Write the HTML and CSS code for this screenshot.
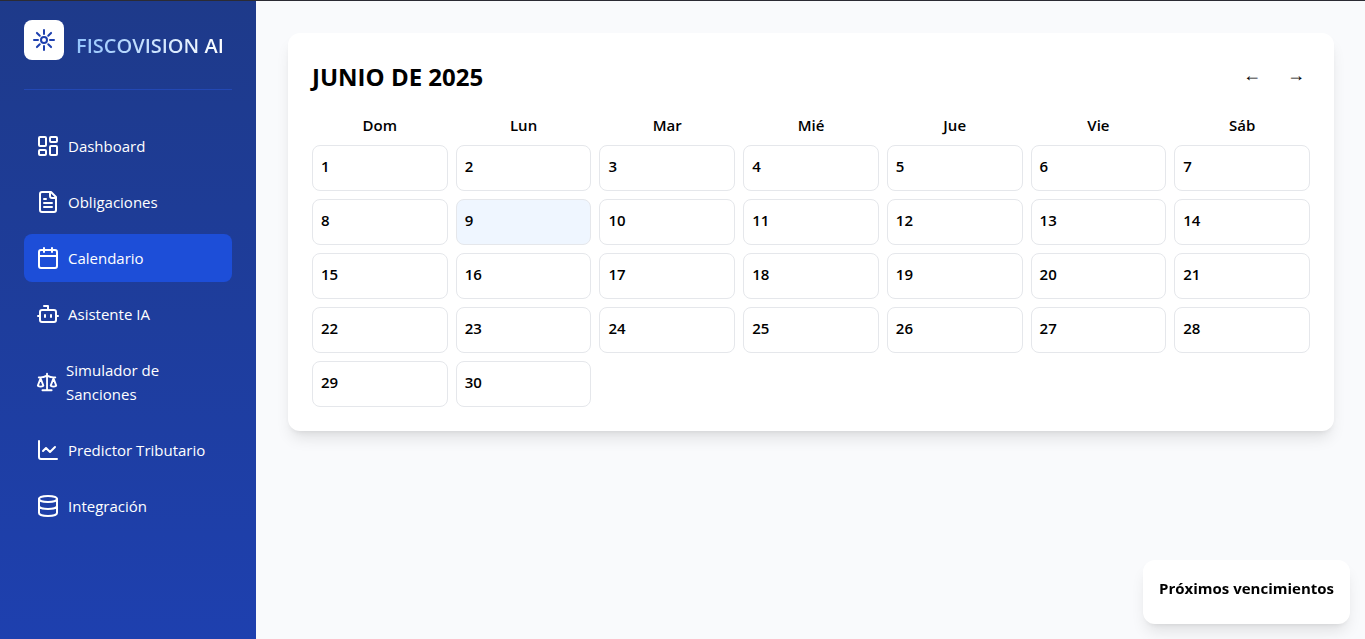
FILE: index.html
```html
<!DOCTYPE html>
<html lang="es">
<head>
<meta charset="utf-8">
<meta name="viewport" content="width=device-width, initial-scale=1">
<title>Fiscovision AI</title>
<link rel="stylesheet" href="styles.css">
</head>
<body class="app">
<aside class="sidebar">
  <div class="brand">
    <span class="brand-logo">
      <svg class="icon" viewBox="0 0 24 24" aria-hidden="true"><circle cx="12" cy="12" r="3"/><path d="M12 2v4M12 18v4M2 12h4M18 12h4M4.93 4.93l2.83 2.83M16.24 16.24l2.83 2.83M4.93 19.07l2.83-2.83M16.24 7.76l2.83-2.83"/></svg>
    </span>
    <span class="brand-name">FISCOVISION AI</span>
  </div>
  <nav class="menu">
    <a class="menu-link" href="#dashboard"><svg class="icon" viewBox="0 0 24 24" aria-hidden="true"><rect x="3" y="3" width="7" height="9" rx="1"/><rect x="14" y="3" width="7" height="5" rx="1"/><rect x="14" y="12" width="7" height="9" rx="1"/><rect x="3" y="16" width="7" height="5" rx="1"/></svg><span>Dashboard</span></a>
    <a class="menu-link" href="#obligaciones"><svg class="icon" viewBox="0 0 24 24" aria-hidden="true"><path d="M15 2H6a2 2 0 0 0-2 2v16a2 2 0 0 0 2 2h12a2 2 0 0 0 2-2V7Z"/><path d="M14 2v4a2 2 0 0 0 2 2h4M10 9H8M16 13H8M16 17H8"/></svg><span>Obligaciones</span></a>
    <a class="menu-link menu-link-active" href="#calendario" aria-current="page"><svg class="icon" viewBox="0 0 24 24" aria-hidden="true"><path d="M8 2v4M16 2v4M3 10h18"/><rect x="3" y="4" width="18" height="18" rx="2"/></svg><span>Calendario</span></a>
    <a class="menu-link" href="#asistente"><svg class="icon" viewBox="0 0 24 24" aria-hidden="true"><path d="M12 8V4H8"/><rect x="4" y="8" width="16" height="12" rx="2"/><path d="M2 14h2M20 14h2M15 13v2M9 13v2"/></svg><span>Asistente IA</span></a>
    <a class="menu-link" href="#simulador"><svg class="icon" viewBox="0 0 24 24" aria-hidden="true"><path d="m16 16 3-8 3 8c-.87.65-1.92 1-3 1s-2.13-.35-3-1ZM2 16l3-8 3 8c-.87.65-1.92 1-3 1s-2.13-.35-3-1ZM7 21h10M12 3v18M3 7h2c2 0 5-1 7-2 2 1 5 2 7 2h2"/></svg><span>Simulador de Sanciones</span></a>
    <a class="menu-link" href="#predictor"><svg class="icon" viewBox="0 0 24 24" aria-hidden="true"><path d="M3 3v16a2 2 0 0 0 2 2h16"/><path d="m7 13 3-3 4 4 5-5"/></svg><span>Predictor Tributario</span></a>
    <a class="menu-link" href="#integracion"><svg class="icon" viewBox="0 0 24 24" aria-hidden="true"><ellipse cx="12" cy="5" rx="9" ry="3"/><path d="M3 5v14a9 3 0 0 0 18 0V5M3 12a9 3 0 0 0 18 0"/></svg><span>Integración</span></a>
  </nav>
</aside>
<main class="content">
  <section class="calendar">
    <header class="calendar-header">
      <h1 class="calendar-title">JUNIO DE 2025</h1>
      <div class="calendar-nav">
        <button class="nav-button" type="button" aria-label="Mes anterior">←</button>
        <button class="nav-button" type="button" aria-label="Mes siguiente">→</button>
      </div>
    </header>
    <table class="month">
      <thead class="month-part">
        <tr class="week"><th class="weekday">Dom</th><th class="weekday">Lun</th><th class="weekday">Mar</th><th class="weekday">Mié</th><th class="weekday">Jue</th><th class="weekday">Vie</th><th class="weekday">Sáb</th></tr>
      </thead>
      <tbody class="month-part">
        <tr class="week"><td class="day">1</td><td class="day">2</td><td class="day">3</td><td class="day">4</td><td class="day">5</td><td class="day">6</td><td class="day">7</td></tr>
        <tr class="week"><td class="day">8</td><td class="day day-today">9</td><td class="day">10</td><td class="day">11</td><td class="day">12</td><td class="day">13</td><td class="day">14</td></tr>
        <tr class="week"><td class="day">15</td><td class="day">16</td><td class="day">17</td><td class="day">18</td><td class="day">19</td><td class="day">20</td><td class="day">21</td></tr>
        <tr class="week"><td class="day">22</td><td class="day">23</td><td class="day">24</td><td class="day">25</td><td class="day">26</td><td class="day">27</td><td class="day">28</td></tr>
        <tr class="week"><td class="day">29</td><td class="day">30</td></tr>
      </tbody>
    </table>
  </section>
</main>
<aside class="upcoming">
  <h2 class="upcoming-title">Próximos vencimientos</h2>
</aside>
</body>
</html>
```
FILE: styles.css
```css
*, *::before, *::after { box-sizing: border-box; }

.app {
  display: flex;
  min-height: 100vh;
  margin: 0;
  border-top: 1px solid #2b2b33;
  background: #f9fafc;
  color: #000;
  font: 15px/24px "Segoe UI", "Open Sans", "Noto Sans", sans-serif;
}

.icon {
  width: 24px;
  height: 24px;
  fill: none;
  stroke: currentColor;
  stroke-width: 2;
  stroke-linecap: round;
  stroke-linejoin: round;
}

.sidebar {
  flex: none;
  width: 256px;
  padding: 19px 24px 24px;
  background: linear-gradient(#1e3a8a, #1e40af);
  color: #fff;
}

.brand {
  display: flex;
  gap: 12px;
  align-items: center;
  padding-bottom: 29px;
  border-bottom: 1px solid #2348b4;
}

.brand-logo {
  display: flex;
  flex: none;
  align-items: center;
  justify-content: center;
  width: 40px;
  height: 40px;
  border-radius: 8px;
  background: #fff;
  color: #1e40af;
}

.brand-name {
  padding-top: 12px;
  background: linear-gradient(90deg, #93c5fd, #fff);
  background-clip: text;
  -webkit-background-clip: text;
  color: transparent;
  font-size: 20px;
  font-weight: 600;
  line-height: 28px;
  white-space: nowrap;
}

.menu {
  display: flex;
  flex-direction: column;
  gap: 8px;
  margin-top: 32px;
}

.menu-link {
  display: flex;
  gap: 8px;
  align-items: center;
  padding: 12px;
  border-radius: 8px;
  color: inherit;
  text-decoration: none;
}

.menu-link-active { background: #1d4ed8; }

.content {
  flex: 1;
  min-width: 0;
  padding: 32px 31px 32px 32px;
}

.calendar {
  padding: 24px;
  border-radius: 12px;
  background: #fff;
  box-shadow: 0 10px 15px -3px rgb(0 0 0 / 10%), 0 4px 6px -4px rgb(0 0 0 / 10%);
}

.calendar-header {
  display: flex;
  align-items: center;
  justify-content: space-between;
  margin-bottom: 16px;
}

.calendar-title {
  margin: 0;
  font-size: 24px;
  font-weight: 700;
  line-height: 32px;
}

.calendar-nav { display: flex; gap: 16px; }

.nav-button {
  width: 28px;
  height: 40px;
  padding: 0 0 4px;
  border: 0;
  border-radius: 8px;
  background: none;
  color: inherit;
  font: 18px/24px "Liberation Sans", sans-serif;
  text-align: center;
  cursor: pointer;
}

.month, .month-part { display: grid; gap: 8px; }

.week {
  display: grid;
  grid-template-columns: repeat(7, minmax(0, 1fr));
  gap: 8px;
}

.weekday {
  padding: 0;
  font-weight: 600;
  text-align: center;
}

.day {
  padding: 8px 8px 12px;
  border: 1px solid #e5e7eb;
  border-radius: 8px;
  font-weight: 600;
}

.day-today { background: #eff6ff; }

.upcoming {
  position: fixed;
  right: 15px;
  bottom: 15px;
  padding: 16px 16px 24px;
  border-radius: 12px;
  background: #fff;
  box-shadow: 0 10px 15px -3px rgb(0 0 0 / 10%), 0 4px 6px -4px rgb(0 0 0 / 10%);
}

.upcoming-title {
  margin: 0;
  font-size: 15px;
  font-weight: 700;
  line-height: 24px;
}
```
